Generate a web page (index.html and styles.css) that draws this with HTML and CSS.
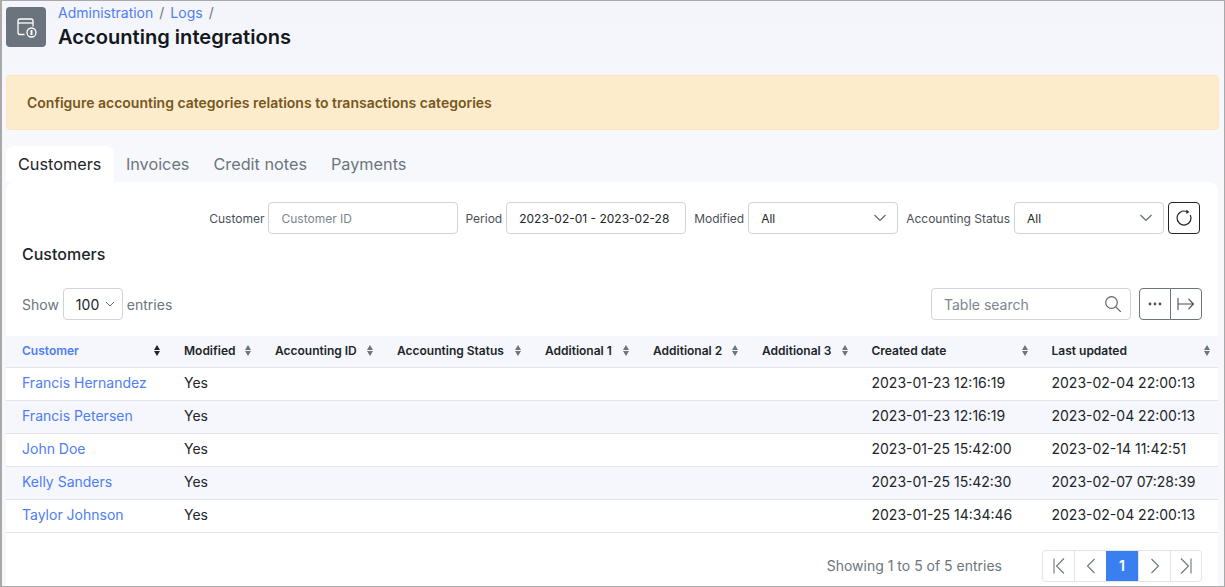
FILE: index.html
```html
<!DOCTYPE html>
<html>
<head>
    <title>Accounting integrations</title>
    <link rel="stylesheet" href="styles.css">
</head>
<body>
<div class="page">
    <div class="page-head">
        <div class="head-icon">
            <svg width="24" height="24" viewBox="0 0 24 24" fill="none" stroke="#fff" stroke-width="1.3">
                <path d="M10.5 19.500H6a2 2 0 0 1-2-2V6a2 2 0 0 1 2-2h11a2 2 0 0 1 2 2v5.500"/>
                <path d="M4 8h15"/>
                <circle cx="17.500" cy="17.500" r="4.500"/>
                <path d="M17.500 15v5" stroke-width="2"/>
            </svg>
        </div>
        <div>
            <div class="crumbs"><a>Administration</a><span>/</span><a>Logs</a><span>/</span></div>
            <h1>Accounting integrations</h1>
        </div>
    </div>

    <div class="alert">Configure accounting categories relations to transactions categories</div>

    <div class="tabs">
        <a class="tab active">Customers</a>
        <a class="tab">Invoices</a>
        <a class="tab">Credit notes</a>
        <a class="tab">Payments</a>
    </div>

    <div class="card">
        <div class="filters">
            <label>Customer</label>
            <div class="field w-190 placeholder">Customer ID</div>
            <label class="tight">Period</label>
            <div class="field w-180 date">2023-02-01 - 2023-02-28</div>
            <label>Modified</label>
            <div class="field w-150 select">All
                <svg width="14" height="8" viewBox="0 0 14 8" fill="none" stroke="#5b6472" stroke-width="1.1"><path d="M1.5 1l5.5 5.5L12.500 1"/></svg>
            </div>
            <label>Accounting Status</label>
            <div class="field w-150 select">All
                <svg width="14" height="8" viewBox="0 0 14 8" fill="none" stroke="#5b6472" stroke-width="1.1"><path d="M1.5 1l5.5 5.500L12.500 1"/></svg>
            </div>
            <button class="refresh">
                <svg width="18" height="18" viewBox="0 0 18 18" fill="none" stroke="#212529" stroke-width="1.2">
                    <path d="M11.500 2.500A7 7 0 1 0 15.300 5.900"/>
                    <path d="M11.300 0.500l3 2.400-3 2z" fill="#212529" stroke="none"/>
                </svg>
            </button>
        </div>

        <h2>Customers</h2>

        <div class="table-tools">
            <div class="show">
                Show
                <div class="page-size">100
                    <svg width="10" height="6" viewBox="0 0 10 6" fill="none" stroke="#5b6472" stroke-width="1"><path d="M1 1l4 4 4-4"/></svg>
                </div>
                entries
            </div>
            <div class="tools-right">
                <div class="search">Table search
                    <svg width="18" height="18" viewBox="0 0 18 18" fill="none" stroke="#5b6472" stroke-width="1.200"><circle cx="7.500" cy="7.500" r="5.800"/><path d="M11.800 11.800l5 5"/></svg>
                </div>
                <div class="btn-group">
                    <button>
                        <svg width="14" height="4" viewBox="0 0 14 4" fill="#495057"><circle cx="2" cy="2" r="1.400"/><circle cx="7" cy="2" r="1.400"/><circle cx="12" cy="2" r="1.400"/></svg>
                    </button>
                    <button>
                        <svg width="18" height="14" viewBox="0 0 18 14" fill="none" stroke="#495057" stroke-width="1.100"><path d="M1 1v12M1 7h15.500M11.500 2l5 5-5 5"/></svg>
                    </button>
                </div>
            </div>
        </div>

        <table>
            <colgroup>
                <col class="c1"><col class="c2"><col class="c3"><col class="c4"><col class="c5">
                <col class="c6"><col class="c7"><col class="c8"><col class="c9">
            </colgroup>
            <thead>
                <tr>
                    <th class="sorted"><div>Customer<i class="sort"></i></div></th>
                    <th><div>Modified<i class="sort"></i></div></th>
                    <th><div>Accounting ID<i class="sort"></i></div></th>
                    <th><div>Accounting Status<i class="sort"></i></div></th>
                    <th><div>Additional 1<i class="sort"></i></div></th>
                    <th><div>Additional 2<i class="sort"></i></div></th>
                    <th><div>Additional 3<i class="sort"></i></div></th>
                    <th><div>Created date<i class="sort"></i></div></th>
                    <th><div>Last updated<i class="sort"></i></div></th>
                </tr>
            </thead>
            <tbody>
                <tr><td><a>Francis Hernandez</a></td><td>Yes</td><td></td><td></td><td></td><td></td><td></td><td>2023-01-23 12:16:19</td><td>2023-02-04 22:00:13</td></tr>
                <tr><td><a>Francis Petersen</a></td><td>Yes</td><td></td><td></td><td></td><td></td><td></td><td>2023-01-23 12:16:19</td><td>2023-02-04 22:00:13</td></tr>
                <tr><td><a>John Doe</a></td><td>Yes</td><td></td><td></td><td></td><td></td><td></td><td>2023-01-25 15:42:00</td><td>2023-02-14 11:42:51</td></tr>
                <tr><td><a>Kelly Sanders</a></td><td>Yes</td><td></td><td></td><td></td><td></td><td></td><td>2023-01-25 15:42:30</td><td>2023-02-07 07:28:39</td></tr>
                <tr><td><a>Taylor Johnson</a></td><td>Yes</td><td></td><td></td><td></td><td></td><td></td><td>2023-01-25 14:34:46</td><td>2023-02-04 22:00:13</td></tr>
            </tbody>
        </table>

        <div class="table-foot">
            <span class="info">Showing 1 to 5 of 5 entries</span>
            <div class="pager">
                <a><svg width="12" height="16" viewBox="0 0 12 16" fill="none" stroke="#6c757d" stroke-width="1.100"><path d="M1 0.500v15M11 0.500L3.500 8l7.500 7.500"/></svg></a>
                <a><svg width="10" height="16" viewBox="0 0 10 16" fill="none" stroke="#6c757d" stroke-width="1.100"><path d="M8.500 1L1.500 8l7 7"/></svg></a>
                <a class="current">1</a>
                <a><svg width="10" height="16" viewBox="0 0 10 16" fill="none" stroke="#6c757d" stroke-width="1.100"><path d="M1.500 1l7 7-7 7"/></svg></a>
                <a><svg width="12" height="16" viewBox="0 0 12 16" fill="none" stroke="#6c757d" stroke-width="1.100"><path d="M11 0.500v15M1 0.500L8.500 8 1 15.500"/></svg></a>
            </div>
        </div>
    </div>
</div>
</body>
</html>
```
FILE: styles.css
```css
* {
    box-sizing: border-box;
}

body {
    margin: 0;
    font-family: Inter, "Liberation Sans", sans-serif;
    color: #212529;
}

a {
    text-decoration: none;
}

.page {
    height: 587px;
    overflow: hidden;
    padding: 0 5px 0 4px;
    border: 1px solid #a9a9a9;
    border-left-width: 2px;
    background: linear-gradient(#f3f5fb, #f6f8fc 120px);
}

.page-head {
    display: flex;
    gap: 12px;
    height: 74px;
    padding-top: 6px;
}

.head-icon {
    display: flex;
    align-items: center;
    justify-content: center;
    width: 40px;
    height: 40px;
    border-radius: 4px;
    background: #6b737d;
}

.crumbs {
    display: flex;
    gap: 6px;
    margin-top: -4px;
    font-size: 14px;
    line-height: 20px;
    color: #6c757d;
}

.crumbs a {
    color: #4f7df3;
}

h1 {
    margin: 1px 0 0;
    font-size: 20.100px;
    line-height: 26px;
    font-weight: 600;
    color: #15181c;
}

.alert {
    height: 55px;
    padding: 0 20px;
    border: 1px solid #fbe6bf;
    border-radius: 4px;
    background: #fdeccc;
    font-size: 14px;
    line-height: 53px;
    font-weight: 600;
    color: #76571f;
}

.tabs {
    display: flex;
    margin-top: 16px;
    height: 36px;
}

.tab {
    padding: 0 12px;
    font-size: 16.250px;
    line-height: 37px;
    color: #6c757d;
}

.tab.active {
    padding-right: 12.500px;
    border-radius: 8px 8px 0 0;
    background: #fff;
    color: #212529;
}

.card {
    height: 420px;
    margin-right: 1px;
    border-radius: 8px 8px 0 0;
    background: #fff;
}

.filters {
    display: flex;
    align-items: center;
    justify-content: flex-end;
    padding: 20px 18px 0 0;
    font-size: 12px;
    color: #495057;
}

.filters label {
    margin: 0 4px 0 8px;
    white-space: nowrap;
}

.filters label.tight {
    margin-left: 7px;
}

.field {
    display: flex;
    align-items: center;
    justify-content: space-between;
    height: 32px;
    padding: 0 10px 0 12px;
    border: 1px solid #ced4da;
    border-radius: 4px;
    font-size: 12px;
    color: #212529;
}

.field.placeholder {
    color: #7b8590;
}

.field.date {
    white-space: nowrap;
}

.field.select svg {
    margin-left: auto;
}

.w-190 {
    width: 190px;
}

.w-180 {
    width: 180px;
}

.w-150 {
    width: 150px;
}

.refresh {
    display: flex;
    align-items: center;
    justify-content: center;
    width: 32px;
    height: 32px;
    margin-left: 4px;
    padding: 0;
    border: 1px solid #212529;
    border-radius: 4px;
    background: #fff;
}

h2 {
    margin: 9px 0 0 16px;
    font-size: 16px;
    line-height: 22px;
    font-weight: 500;
    color: #212529;
}

.table-tools {
    display: flex;
    align-items: center;
    justify-content: space-between;
    height: 32px;
    margin-top: 23px;
    padding: 0 16px;
}

.show {
    display: flex;
    align-items: center;
    gap: 4px;
    font-size: 14px;
    color: #6c757d;
}

.page-size {
    display: flex;
    align-items: center;
    gap: 6px;
    width: 60px;
    height: 32px;
    padding-left: 12px;
    border: 1px solid #ced4da;
    border-radius: 4px;
    color: #212529;
}

.tools-right {
    display: flex;
    gap: 8px;
}

.search {
    display: flex;
    align-items: center;
    justify-content: space-between;
    width: 200px;
    height: 32px;
    padding: 0 8px 0 12px;
    border: 1px solid #ced4da;
    border-radius: 4px;
    font-size: 14px;
    color: #7b8590;
}

.btn-group {
    display: flex;
}

.btn-group button {
    display: flex;
    align-items: center;
    justify-content: center;
    width: 32px;
    height: 32px;
    padding: 0;
    border: 1px solid #6c757d;
    border-radius: 4px 0 0 4px;
    background: #fff;
}

.btn-group button + button {
    margin-left: -1px;
    border-radius: 0 4px 4px 0;
}

table {
    width: 1212px;
    margin-top: 16px;
    border-collapse: collapse;
    table-layout: fixed;
}

.c1 { width: 162px; }
.c2 { width: 91px; }
.c3 { width: 122px; }
.c4 { width: 148px; }
.c5 { width: 108px; }
.c6 { width: 109px; }
.c7 { width: 109.500px; }
.c8 { width: 180px; }
.c9 { width: 182.500px; }

th {
    height: 31px;
    padding: 0 7px 2px 16px;
    border-bottom: 1px solid #e1e5eb;
    background: #f5f7fc;
    font-size: 12px;
    font-weight: 600;
    text-align: left;
    white-space: nowrap;
    color: #212529;
}

th div {
    display: flex;
    align-items: center;
    justify-content: space-between;
}

th.sorted {
    color: #4f7df3;
}

.sort {
    position: relative;
    display: block;
    width: 7px;
    height: 11px;
}

.sort::before,
.sort::after {
    content: "";
    position: absolute;
    left: 0;
    border-left: 3.500px solid transparent;
    border-right: 3.500px solid transparent;
}

.sort::before {
    top: 0;
    border-bottom: 5px solid #6c757d;
}

.sort::after {
    bottom: 0;
    border-top: 5px solid #6c757d;
}

th.sorted .sort::before {
    border-bottom-color: #212529;
}

th.sorted .sort::after {
    border-top-color: #212529;
}

td {
    height: 33px;
    padding: 0 0 2px 16px;
    border-bottom: 1px solid #e1e5eb;
    font-size: 14px;
    white-space: nowrap;
    color: #212529;
}

tbody tr:nth-child(even) td {
    background: #f5f7fc;
}

td a {
    color: #4f7df3;
}

.table-foot {
    display: flex;
    align-items: center;
    justify-content: flex-end;
    gap: 40px;
    margin-top: 17px;
    padding-right: 16px;
}

.info {
    font-size: 14px;
    color: #6c757d;
}

.pager {
    display: flex;
    height: 32px;
    border: 1px solid #e1e5eb;
    border-radius: 4px;
    overflow: hidden;
}

.pager a {
    display: flex;
    align-items: center;
    justify-content: center;
    width: 32px;
    border-left: 1px solid #e1e5eb;
}

.pager a:first-child {
    width: 31px;
    border-left: 0;
}

.pager a:last-child {
    width: 31px;
}

.pager .current {
    border-left: 0;
    background: #3a7ff0;
    font-size: 14px;
    font-weight: 600;
    color: #fff;
}
```
